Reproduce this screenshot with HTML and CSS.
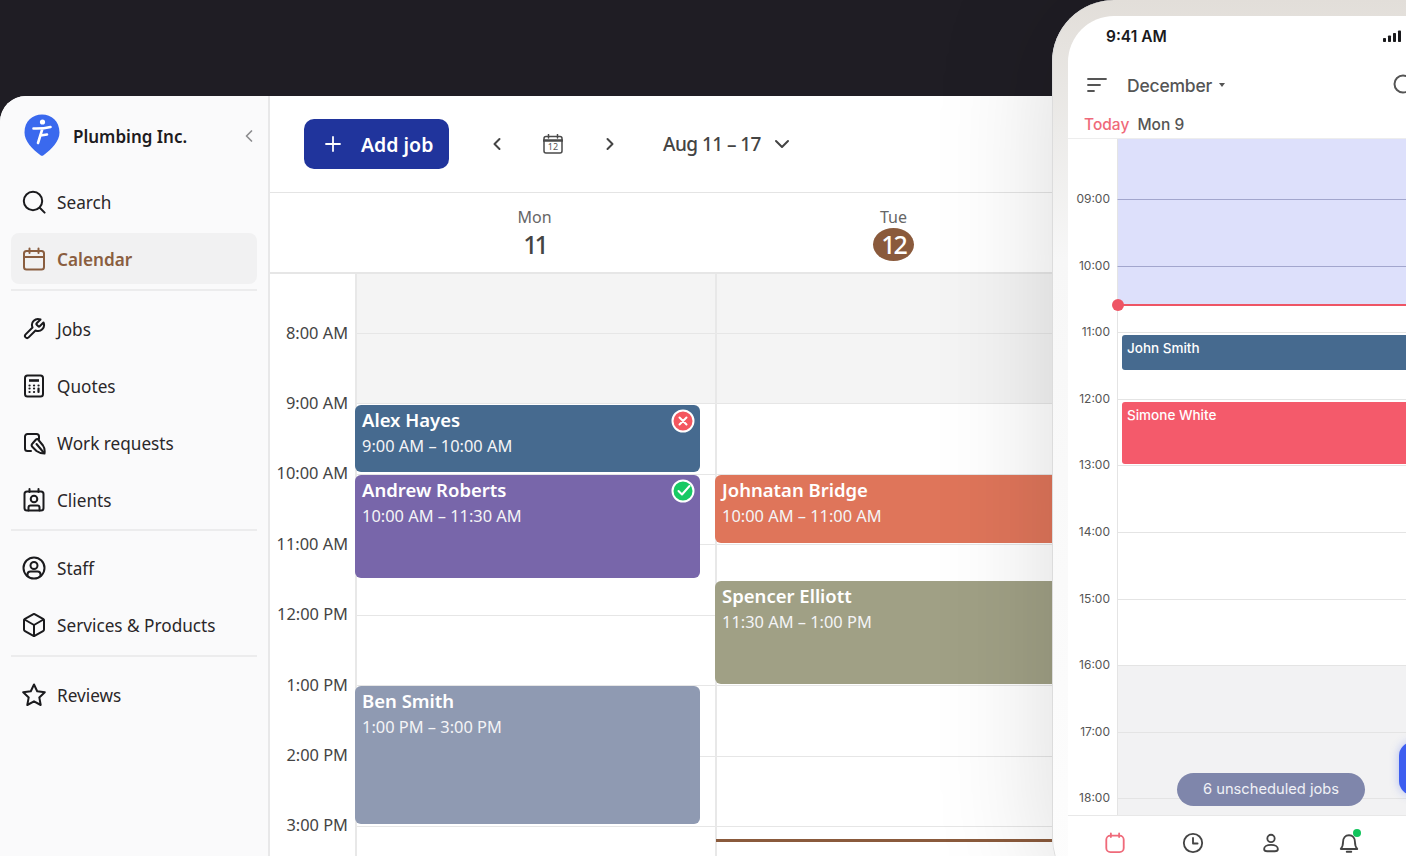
FILE: index.html
```html
<!DOCTYPE html>
<html lang="en">
<head>
<meta charset="utf-8"/>
<meta content="width=device-width, initial-scale=1.0" name="viewport"/>
<title>Plumbing Inc. Calendar</title>
<link rel="stylesheet" href="styles.css">
</head>
<body>
<div class="app">
  <aside class="sidebar">
    <div class="brand">
      <svg class="brand-logo" viewBox="0 0 36 42">
        <path class="pin" d="M18 0.5C27.5 0.5 35.5 7 35.5 18.5C35.5 27 28 35 19.5 41.2C18.6 41.9 17.4 41.9 16.5 41.2C8 35 0.5 27 0.5 18.5C0.5 7 8.5 0.5 18 0.5Z"/>
        <circle class="pin-mark-dot" cx="18.5" cy="8" r="2.6"/>
        <path class="pin-mark" d="M9.5 14.5C13 14.6 21 14.4 26.5 13M18.500 14.500L14 29M16.500 21.500L23 20.500"/>
      </svg>
      <span class="brand-name">Plumbing Inc.</span>
      <svg class="brand-collapse" viewBox="0 0 12 16"><path d="M8.5 3L3.5 8L8.5 13"/></svg>
    </div>
    <nav class="nav">
      <a class="nav-item" href="#">
        <svg class="icon" viewBox="0 0 24 24"><circle cx="11" cy="11" r="9.2"/><path d="M18 18L22.6 22.6"/></svg>
        Search
      </a>
      <a class="nav-item active" href="#">
        <svg class="icon" viewBox="0 0 24 24"><rect x="2" y="4" width="20" height="18.5" rx="2.5"/><path d="M7.5 1.5V6M16.5 1.5V6M2 10H22"/></svg>
        Calendar
      </a>
      <div class="nav-divider"></div>
      <a class="nav-item" href="#">
        <svg class="icon" viewBox="0 0 24 24"><path d="M14.7 6.3a1 1 0 0 0 0 1.4l1.6 1.6a1 1 0 0 0 1.4 0l3.77-3.77a6 6 0 0 1-7.94 7.94l-6.91 6.91a2.12 2.12 0 0 1-3-3l6.91-6.91a6 6 0 0 1 7.94-7.94l-3.76 3.76z"/></svg>
        Jobs
      </a>
      <a class="nav-item" href="#">
        <svg class="icon" viewBox="0 0 24 24"><rect x="3" y="1.5" width="18" height="21" rx="2.5"/><path class="thick" d="M7 6.5H17"/><path class="dots" d="M7.5 11.5H7.6M12 11.5H12.1M16.5 11.5H16.6M7.5 14.5H7.6M12 14.5H12.1M16.5 14.5H16.6M7.5 18H7.6M12 18H12.1M16.5 18V14.5"/></svg>
        Quotes
      </a>
      <a class="nav-item" href="#">
        <svg class="icon" viewBox="0 0 24 24"><path d="M9 20H5.500A2.500 2.500 0 0 1 3 17.500V5.500A2.500 2.500 0 0 1 5.500 3H14.500A2.500 2.500 0 0 1 17 5.500V8"/><path d="M10.500 12.500L14 8.500C15 7.500 16 8 16.500 9L21 14.500C22.500 16.500 23 19 22.500 22.500C19 22.500 16.500 21.500 14.500 20L10.500 16C9.500 15 9.500 13.500 10.500 12.500Z"/><path d="M14.500 13L22 22"/></svg>
        Work requests
      </a>
      <a class="nav-item" href="#">
        <svg class="icon" viewBox="0 0 24 24"><rect x="2.500" y="3.500" width="19" height="19" rx="2.500"/><path d="M7.500 1V4M16.500 1V4"/><circle cx="12" cy="11" r="3.300"/><path d="M6.500 22.500V19.500C6.500 18 7.500 17.500 8.500 17.500H15.500C16.500 17.500 17.500 18 17.500 19.500V22.500"/></svg>
        Clients
      </a>
      <div class="nav-divider tight"></div>
      <a class="nav-item" href="#">
        <svg class="icon" viewBox="0 0 24 24"><circle cx="12" cy="12" r="10.500"/><circle cx="12" cy="9.500" r="3.500"/><path d="M5.500 20V18.500C5.500 16.500 7 15.500 8.500 15.500H15.500C17 15.500 18.500 16.500 18.500 18.500V20"/></svg>
        Staff
      </a>
      <a class="nav-item" href="#">
        <svg class="icon" viewBox="0 0 24 24"><path d="M22 7.500a2 2 0 0 0-1-1.730l-8-4.500a2 2 0 0 0-2 0l-8 4.500A2 2 0 0 0 2 7.500v9a2 2 0 0 0 1 1.730l8 4.500a2 2 0 0 0 2 0l8-4.500a2 2 0 0 0 1-1.730Z"/><path d="M2.500 6.500L12 12L21.500 6.500M12 23V12"/></svg>
        Services &amp; Products
      </a>
      <div class="nav-divider"></div>
      <a class="nav-item" href="#">
        <svg class="icon" viewBox="0 0 24 24"><polygon points="12 1.500 15.200 8.200 22.800 9.200 17.300 14.400 18.700 22 12 18.300 5.300 22 6.700 14.400 1.200 9.200 8.800 8.200 12 1.500"/></svg>
        Reviews
      </a>
    </nav>
  </aside>

  <main class="main">
    <div class="toolbar">
      <button class="add-job" type="button">
        <svg class="add-plus" viewBox="0 0 16 16"><path d="M8 1V15M1 8H15"/></svg>
        Add job
      </button>
      <svg class="tool-chevron" viewBox="0 0 12 16"><path d="M8.500 3L3.500 8L8.500 13"/></svg>
      <svg class="tool-calendar" viewBox="0 0 20 20">
        <rect x="1" y="2.500" width="18" height="16.500" rx="2"/>
        <path d="M5.500 0.500V4M14.500 0.500V4"/>
        <path class="tool-calendar-bar" d="M1 6.500H19"/>
        <text x="10" y="16.300" text-anchor="middle">12</text>
      </svg>
      <svg class="tool-chevron" viewBox="0 0 12 16"><path d="M3.500 3L8.500 8L3.500 13"/></svg>
      <div class="range">Aug 11 – 17
        <svg class="range-chevron" viewBox="0 0 16 12"><path d="M2 3L8 9L14 3"/></svg>
      </div>
    </div>

    <div class="day-heads">
      <div class="day-head">
        <span class="day-name">Mon</span>
        <span class="day-num">11</span>
      </div>
      <div class="day-head">
        <span class="day-name">Tue</span>
        <span class="day-num today">12</span>
      </div>
    </div>

    <div class="grid">
      <div class="times">
        <div class="time">8:00 AM</div>
        <div class="time">9:00 AM</div>
        <div class="time">10:00 AM</div>
        <div class="time">11:00 AM</div>
        <div class="time">12:00 PM</div>
        <div class="time">1:00 PM</div>
        <div class="time">2:00 PM</div>
        <div class="time">3:00 PM</div>
      </div>

      <div class="day">
        <div class="cell first off"></div>
        <div class="cell off"></div>
        <div class="cell"></div><div class="cell"></div><div class="cell"></div>
        <div class="cell"></div><div class="cell"></div><div class="cell"></div>

        <div class="event ev-alex">
          <div class="event-title">Alex Hayes</div>
          <div class="event-time">9:00 AM – 10:00 AM</div>
          <svg class="event-badge" viewBox="0 0 24 24"><circle class="badge-red" cx="12" cy="12" r="10.500"/><path d="M8.500 8.500L15.500 15.500M15.500 8.500L8.500 15.500"/></svg>
        </div>
        <div class="event ev-andrew">
          <div class="event-title">Andrew Roberts</div>
          <div class="event-time">10:00 AM – 11:30 AM</div>
          <svg class="event-badge" viewBox="0 0 24 24"><circle class="badge-green" cx="12" cy="12" r="10.500"/><path d="M7.500 12L11 15.500L18.500 7"/></svg>
        </div>
        <div class="event ev-ben">
          <div class="event-title">Ben Smith</div>
          <div class="event-time">1:00 PM – 3:00 PM</div>
        </div>
      </div>

      <div class="day wide">
        <div class="cell first off"></div>
        <div class="cell off"></div>
        <div class="cell"></div><div class="cell"></div><div class="cell"></div>
        <div class="cell"></div><div class="cell"></div><div class="cell"></div>

        <div class="event ev-johnatan">
          <div class="event-title">Johnatan Bridge</div>
          <div class="event-time">10:00 AM – 11:00 AM</div>
        </div>
        <div class="event ev-spencer">
          <div class="event-title">Spencer Elliott</div>
          <div class="event-time">11:30 AM – 1:00 PM</div>
        </div>
        <div class="now-bar"></div>
      </div>
    </div>
  </main>
</div>

<div class="phone">
  <div class="screen">
    <div class="status">
      <span class="status-time">9:41 AM</span>
      <svg class="signal" viewBox="0 0 18 12"><rect x="0" y="8" width="3" height="4" rx="0.800"/><rect x="5" y="5.500" width="3" height="6.500" rx="0.800"/><rect x="10" y="3" width="3" height="9" rx="0.800"/><rect x="15" y="0.500" width="3" height="11.500" rx="0.800"/></svg>
    </div>
    <div class="phone-head">
      <svg class="phone-menu" viewBox="0 0 20 16"><path d="M1 2H19M1 8H13M1 14H7"/></svg>
      <span class="month">December</span>
      <span class="month-caret"></span>
      <svg class="phone-search" viewBox="0 0 24 24"><circle cx="11" cy="11" r="8.500"/></svg>
    </div>
    <div class="phone-date"><span class="phone-today">Today</span> Mon 9</div>
    <div class="phone-grid">
      <div class="slot first blue"></div>
      <div class="slot blue"><span class="slot-time">09:00</span></div>
      <div class="slot part-blue"><span class="slot-time">10:00</span></div>
      <div class="slot"><span class="slot-time">11:00</span></div>
      <div class="slot"><span class="slot-time">12:00</span></div>
      <div class="slot"><span class="slot-time">13:00</span></div>
      <div class="slot"><span class="slot-time">14:00</span></div>
      <div class="slot"><span class="slot-time">15:00</span></div>
      <div class="slot grey"><span class="slot-time">16:00</span></div>
      <div class="slot grey"><span class="slot-time">17:00</span></div>
      <div class="slot grey"><span class="slot-time">18:00</span></div>

      <div class="now-line"></div>
      <div class="phone-event pe-john">John Smith</div>
      <div class="phone-event pe-simone">Simone White</div>
      <div class="unscheduled">6 unscheduled jobs</div>
      <div class="fab"></div>
    </div>
    <div class="tabbar">
      <svg class="tab tab-active" viewBox="0 0 24 24"><rect x="2.500" y="4" width="19" height="18" rx="4.500"/><path d="M7.500 1.500V5.500M16.500 1.500V5.500"/></svg>
      <svg class="tab" viewBox="0 0 24 24"><circle cx="12" cy="12" r="10"/><path d="M12 6.500V12.500H17"/></svg>
      <svg class="tab" viewBox="0 0 24 24"><circle cx="12" cy="7" r="4"/><path d="M12 14C7.500 14 4.500 16 4.500 18.500C4.500 20.500 6 21 8 21H16C18 21 19.500 20.500 19.500 18.500C19.500 16 16.500 14 12 14Z"/></svg>
      <div class="tab-bell">
        <svg class="tab" viewBox="0 0 24 24"><path d="M3 18.500H21C19 16.500 18.500 15 18.500 11C18.500 6.500 16 3.500 12 3.500C8 3.500 5.500 6.500 5.500 11C5.500 15 5 16.500 3 18.500Z"/><path d="M9.500 21.500H14.500"/></svg>
        <span class="bell-dot"></span>
      </div>
    </div>
  </div>
</div>
</body>
</html>
```

FILE: styles.css
```css
body {
    margin: 0;
    width: 1406px;
    height: 856px;
    overflow: hidden;
    position: relative;
    background: #1f1d24;
    font-family: "Noto Sans", Arial, sans-serif;
}

svg {
    display: block;
    flex-shrink: 0;
    fill: none;
    stroke-linecap: round;
    stroke-linejoin: round;
}

.app {
    display: flex;
    margin-top: 96px;
    height: 760px;
    background: #fff;
    border-top-left-radius: 26px;
    overflow: hidden;
}

/* sidebar */
.sidebar {
    width: 268px;
    flex-shrink: 0;
    background: #fafafb;
    border-right: 2px solid #e8e8e9;
}

.brand {
    display: flex;
    align-items: center;
    height: 80px;
    padding-left: 24px;
    box-sizing: border-box;
}

.brand-logo {
    width: 36px;
    height: 42px;
    margin-right: 13px;
    margin-top: -2px;
}

.pin {
    fill: #3a69ee;
}

.pin-mark-dot {
    fill: #fff;
}

.pin-mark {
    stroke: #fff;
    stroke-width: 2.6;
}

.brand-name {
    flex: 1;
    font-size: 17px;
    font-weight: 600;
    color: #1d1b20;
}

.brand-collapse {
    width: 12px;
    height: 16px;
    margin-right: 13px;
    stroke: #8d8d90;
    stroke-width: 1.7;
}

.nav {
    display: flex;
    flex-direction: column;
    gap: 6px;
    padding: 0 11px;
}

.nav-item {
    display: flex;
    align-items: center;
    gap: 11px;
    height: 51px;
    padding: 2px 0 0 11px;
    box-sizing: border-box;
    border-radius: 8px;
    color: #2a2729;
    font-size: 17.2px;
    text-decoration: none;
}

.nav-item.active {
    background: #f1f1f2;
    color: #8a5e40;
    font-weight: 600;
}

.nav-item.active .icon {
    stroke: #8a5e40;
}

.icon {
    width: 24px;
    height: 24px;
    margin-top: -2px;
    stroke: #1a1a1d;
    stroke-width: 2;
}

.icon .thick {
    stroke-width: 2.6;
    stroke-linecap: butt;
}

.icon .dots {
    stroke-width: 2.2;
}

.nav-divider {
    height: 2px;
    background: #ececed;
    margin: -1px 0 6px;
}

.nav-divider.tight {
    margin: -2px 0 5px;
}

/* main calendar */
.main {
    flex: 1;
    min-width: 0;
    background: #fff;
}

.toolbar {
    display: flex;
    align-items: center;
    height: 97px;
    padding-left: 34px;
    box-sizing: border-box;
    border-bottom: 1px solid #e4e4e4;
}

.add-job {
    display: flex;
    align-items: center;
    gap: 20px;
    width: 145px;
    height: 50px;
    padding: 0 0 0 21px;
    background: #20349c;
    color: #fff;
    border: none;
    border-radius: 10px;
    font-family: inherit;
    font-size: 19.5px;
    font-weight: 600;
    cursor: pointer;
}

.add-plus {
    width: 16px;
    height: 16px;
    stroke: #fff;
    stroke-width: 1.8;
}

.tool-chevron {
    width: 12px;
    height: 16px;
    stroke: #444;
    stroke-width: 2;
    margin-left: 42px;
}

.tool-chevron + .tool-calendar {
    margin-left: 40px;
}

.tool-calendar {
    width: 20px;
    height: 20px;
    stroke: #4a4a4a;
    stroke-width: 1.5;
}

.tool-calendar + .tool-chevron {
    margin-left: 41px;
}

.tool-calendar-bar {
    stroke-width: 2.6;
}

.tool-calendar text {
    font-family: "Noto Sans", Arial, sans-serif;
    font-size: 9px;
    fill: #555;
    stroke: none;
}

.range {
    display: flex;
    align-items: center;
    gap: 13px;
    margin-left: 47px;
    color: #444;
    font-size: 19px;
    font-weight: 500;
    letter-spacing: -0.55px;
    white-space: nowrap;
}

.range-chevron {
    width: 16px;
    height: 12px;
    stroke: #444;
    stroke-width: 2;
}

.day-heads {
    display: flex;
    height: 81px;
    padding-left: 85px;
    box-sizing: border-box;
    border-bottom: 2px solid #e6e6e6;
}

.day-head {
    width: 359px;
    display: flex;
    flex-direction: column;
    align-items: center;
    padding-top: 14px;
    box-sizing: border-box;
    color: #555;
}

.day-name {
    font-size: 16px;
    line-height: 20px;
    color: #666;
}

.day-num {
    font-size: 25px;
    font-weight: 500;
    line-height: 34px;
    letter-spacing: -3px;
    color: #444;
}

.day-num.today {
    width: 41px;
    height: 33px;
    margin-top: 1px;
    line-height: 33px;
    letter-spacing: -2px;
    text-align: center;
    background: #8a5a3c;
    color: #fff;
    border-radius: 50%;
}

.grid {
    display: flex;
    height: 582px;
    overflow: hidden;
}

.times {
    width: 85px;
    flex-shrink: 0;
    padding-top: 23.5px;
    box-sizing: border-box;
}

.time {
    height: 70.43px;
    line-height: 70.43px;
    padding-right: 7px;
    text-align: right;
    font-size: 16.4px;
    color: #444;
}

.day {
    position: relative;
    width: 358px;
    flex-shrink: 0;
    border-left: 2px solid #e8e8e8;
}

.day.wide {
    width: 400px;
}

.cell {
    height: 70.43px;
    box-sizing: border-box;
    border-bottom: 1px solid #e6e6e6;
}

.cell.first {
    height: 60px;
}

.cell.off {
    background: #f4f4f4;
}

.event {
    position: absolute;
    box-sizing: border-box;
    padding: 2px 7px;
    border-radius: 6px;
    color: #fff;
}

.event-title {
    font-size: 18.5px;
    font-weight: 600;
    line-height: 26px;
}

.event-time {
    font-size: 16.4px;
    line-height: 26px;
    color: #f4f4f6;
}

.event-badge {
    position: absolute;
    top: 4px;
    right: 5px;
    width: 24px;
    height: 24px;
    stroke: #fff;
    stroke-width: 2;
}

.badge-red {
    fill: #f4565f;
}

.badge-green {
    fill: #17c964;
}

.ev-alex,
.ev-andrew,
.ev-ben {
    left: -2px;
    width: 345px;
}

.ev-alex {
    top: 131px;
    height: 67px;
    background: #466a8f;
}

.ev-andrew {
    top: 201px;
    height: 103px;
    background: #7866aa;
}

.ev-ben {
    top: 412px;
    height: 138px;
    background: #8f9ab2;
}

.ev-johnatan,
.ev-spencer {
    left: -2px;
    width: 360px;
}

.ev-johnatan {
    top: 201px;
    height: 68px;
    background: #df755a;
}

.ev-spencer {
    top: 307px;
    height: 103px;
    background: #a0a085;
}

.now-bar {
    position: absolute;
    top: 565px;
    left: -1px;
    width: 100%;
    height: 3px;
    background: #8a5a3c;
}

/* phone mockup on top of the page */
.phone {
    position: absolute;
    left: 1052px;
    top: 0;
    width: 420px;
    height: 900px;
    padding: 16px 0 0 16px;
    box-sizing: border-box;
    background: linear-gradient(#e2ded9, #ecebe9 130px, #f7f7f7 260px, #fdfdfd);
    border-radius: 62px;
    box-shadow: inset 1px 0 0 #dcdcdc, 0 0 120px rgba(0, 0, 0, 0.15);
}

.screen {
    height: 840px;
    background: #fff;
    border-top-left-radius: 46px;
    overflow: hidden;
    display: flex;
    flex-direction: column;
    font-family: Inter, "Noto Sans", sans-serif;
}

.status {
    display: flex;
    align-items: center;
    height: 40px;
    padding-left: 38px;
}

.status-time {
    font-size: 15.5px;
    font-weight: 600;
    color: #1a1a1d;
    white-space: nowrap;
}

.signal {
    width: 18px;
    height: 12px;
    fill: #1a1a1d;
    margin-left: auto;
    margin-right: 71px;
}

.phone-head {
    display: flex;
    align-items: center;
    height: 60px;
    padding: 0 0 2px 19px;
    box-sizing: border-box;
}

.phone-menu {
    width: 20px;
    height: 16px;
    stroke: #555;
    stroke-width: 1.800;
}

.month {
    margin-left: 20px;
    font-size: 17.5px;
    font-weight: 500;
    letter-spacing: -0.2px;
    color: #555;
}

.month-caret {
    margin-left: 7px;
    border-left: 3.500px solid transparent;
    border-right: 3.500px solid transparent;
    border-top: 4px solid #555;
}

.phone-search {
    width: 24px;
    height: 24px;
    margin-left: 167px;
    stroke: #555;
    stroke-width: 2;
}

.phone-date {
    height: 22px;
    line-height: 18px;
    padding-left: 16px;
    font-size: 15.5px;
    font-weight: 500;
    color: #555;
    border-bottom: 1px solid #ededed;
}

.phone-today {
    color: #ef6a7a;
    margin-right: 4px;
}

.phone-grid {
    position: relative;
    height: 676px;
    flex-shrink: 0;
    overflow: hidden;
}

.slot {
    position: relative;
    height: 66.6px;
    box-sizing: border-box;
    margin-left: 49px;
    padding-left: 0;
    border-left: 1px solid #e4e4e4;
    border-top: 1px solid #e4e4e4;
}

.slot.first {
    height: 60px;
    border-top: none;
}

.slot.blue {
    background: #dde0fb;
    border-top-color: #a2a6cd;
}

.slot.part-blue {
    background: linear-gradient(#dde0fb 39px, #fff 39px);
    border-top-color: #a2a6cd;
}

.slot.grey {
    background: #f2f2f3;
}

.slot-time {
    position: absolute;
    right: 100%;
    top: -9px;
    margin-right: 8px;
    font-size: 12px;
    line-height: 16px;
    color: #555;
}

.now-line {
    position: absolute;
    left: 50px;
    right: 0;
    top: 165px;
    height: 2px;
    background: #ee5565;
}

.now-line::before {
    content: '';
    position: absolute;
    left: -6px;
    top: -5px;
    width: 12px;
    height: 12px;
    border-radius: 50%;
    background: #ee5565;
}

.phone-event {
    position: absolute;
    left: 54px;
    right: 0;
    padding: 4px 5px;
    border-radius: 3px;
    color: #fff;
    font-size: 13.5px;
    font-weight: 500;
    line-height: 18px;
    box-sizing: border-box;
}

.pe-john {
    top: 196px;
    height: 35px;
    background: #466a8f;
}

.pe-simone {
    top: 263px;
    height: 62px;
    background: #f45a6b;
}

.unscheduled {
    position: absolute;
    left: 109px;
    top: 634px;
    width: 188px;
    height: 33px;
    line-height: 33px;
    text-align: center;
    border-radius: 17px;
    background: #7f86ab;
    color: #f0f1f6;
    font-size: 14.7px;
}

.fab {
    position: absolute;
    left: 331px;
    top: 603px;
    width: 60px;
    height: 53px;
    border-radius: 14px;
    background: #3d5ef0;
    box-shadow: 0 0 10px rgba(61, 94, 240, 0.35);
}

.tabbar {
    display: flex;
    align-items: flex-start;
    gap: 56px;
    flex: 1;
    padding: 16px 0 0 36px;
    background: #fff;
    border-top: 1px solid #e8e8e8;
}

.tab {
    width: 22px;
    height: 22px;
    stroke: #444;
    stroke-width: 2;
}

.tab-active {
    stroke: #ef6a7a;
}

.tab-bell {
    position: relative;
}

.bell-dot {
    position: absolute;
    top: -3px;
    right: -1px;
    width: 8px;
    height: 8px;
    border-radius: 50%;
    background: #12c45c;
}
```
